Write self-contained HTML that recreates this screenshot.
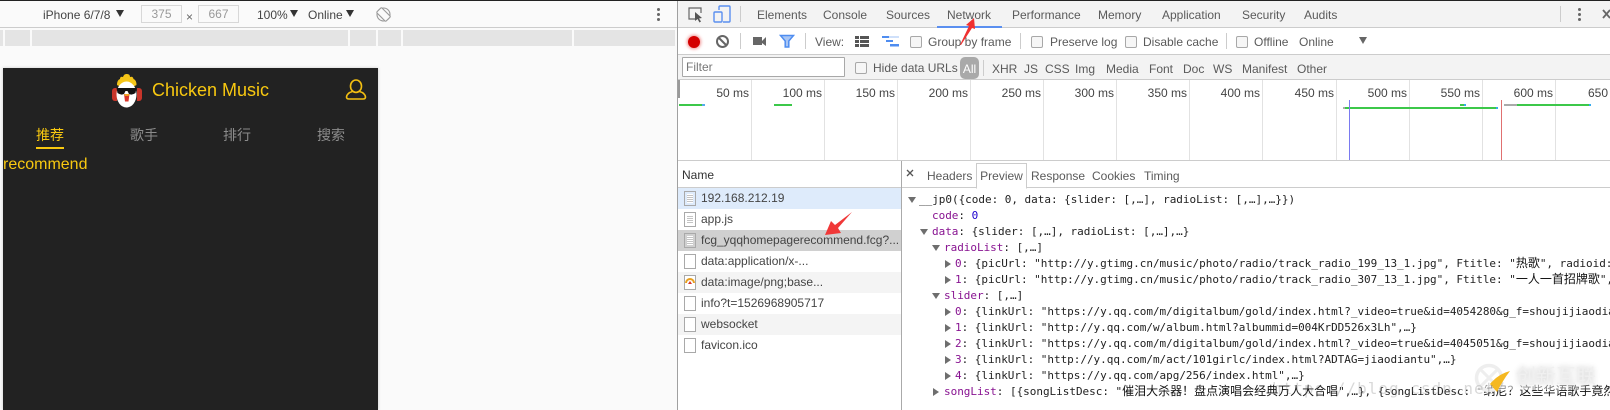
<!DOCTYPE html>
<html><head><meta charset="utf-8"><style>
html,body{margin:0;padding:0}
body{width:1610px;height:410px;overflow:hidden;position:relative;background:#fafafa;font:12px "Liberation Sans","Noto Sans CJK SC",sans-serif;color:#5a5a5a}
div,span.a{position:absolute}
.t{position:absolute;white-space:nowrap;line-height:16px;height:16px}
.d{position:absolute;width:1px;height:16px;background:#ccc}
.cb{position:absolute;width:10px;height:10px;border:1px solid #a8a8a8;border-radius:2px;background:#f6f6f6}
.g{position:absolute;top:80px;width:1px;height:80px;background:#e2e2e2}
.l{position:absolute;top:85px;white-space:nowrap;line-height:16px;width:60px;text-align:right;color:#444}
.r{position:absolute;left:678px;width:224px;height:21px}
.n{position:absolute;left:701px;white-space:nowrap;line-height:21px;color:#444;font-size:12px}
.i{position:absolute;left:684px;width:10px;height:13px;border:1px solid #a9a9a9;background:#fff}
.i.x{background:repeating-linear-gradient(#fff 0 1px,#c4c4c4 1px 2px);background-clip:content-box;padding:2px;width:6px;height:9px}
.m{position:absolute;white-space:pre;font:11px/16px "DejaVu Sans Mono","Noto Sans CJK SC",monospace;color:#222;height:16px;letter-spacing:-.025px}
.k{color:#881391}
.c{font-size:12px;line-height:0;color:#111;letter-spacing:0}
.tr{position:absolute;width:0;height:0;border-top:4px solid transparent;border-bottom:4px solid transparent;border-left:6px solid #6e6e6e}
.td{position:absolute;width:0;height:0;border-left:4px solid transparent;border-right:4px solid transparent;border-top:6px solid #6e6e6e}
.rg{position:absolute;top:30px;height:16px;background:#e4e4e4}
</style></head><body>

<!-- top line -->
<div style="left:0;top:0;width:1610px;height:1px;background:#222;z-index:5"></div>

<!-- device toolbar -->
<div style="left:0;top:1px;width:677px;height:26px;background:#fafafa;border-bottom:1px solid #ccc"></div>
<span class="t" style="left:43px;top:7px;color:#444">iPhone 6/7/8</span>
<div class="td" style="left:116px;top:10px;border-top-color:#333;border-top-width:7px"></div>
<div style="left:141px;top:5px;width:39px;height:16px;border:1px solid #d8d8d8;text-align:center;line-height:17px;color:#999;background:#fafafa">375</div>
<span class="t" style="left:186px;top:9px;color:#666">×</span>
<div style="left:198px;top:5px;width:39px;height:16px;border:1px solid #d8d8d8;text-align:center;line-height:17px;color:#999;background:#fafafa">667</div>
<span class="t" style="left:257px;top:7px;color:#444">100%</span>
<div class="td" style="left:290px;top:10px;border-top-color:#333;border-top-width:7px"></div>
<span class="t" style="left:308px;top:7px;color:#444">Online</span>
<div class="td" style="left:346px;top:10px;border-top-color:#333;border-top-width:7px"></div>
<svg style="position:absolute;left:376px;top:7px" width="15" height="15" viewBox="0 0 15 15"><circle cx="7.500" cy="7.500" r="6.500" fill="none" stroke="#999" stroke-width="1.100"/><rect x="1" y="4" width="13" height="7" rx="1" transform="rotate(45 7.500 7.500)" fill="#fafafa" stroke="#999" stroke-width="1.100"/></svg>
<div style="left:657px;top:8px;width:3px;height:3px;border-radius:2px;background:#666"></div>
<div style="left:657px;top:13px;width:3px;height:3px;border-radius:2px;background:#666"></div>
<div style="left:657px;top:18px;width:3px;height:3px;border-radius:2px;background:#666"></div>

<!-- ruler -->
<div class="rg" style="left:0;width:3px"></div>
<div class="rg" style="left:5px;width:25px"></div>
<div class="rg" style="left:32px;width:316px"></div>
<div class="rg" style="left:350px;width:26px"></div>
<div class="rg" style="left:378px;width:23px"></div>
<div class="rg" style="left:403px;width:169px"></div>
<div class="rg" style="left:574px;width:101px"></div>

<!-- phone -->
<div style="left:3px;top:68px;width:375px;height:342px;background:#222;box-shadow:0 0 3px #ccc"></div>
<svg style="position:absolute;left:105px;top:68px" width="45" height="42" viewBox="0 0 45 42">
<path d="M12 17 Q12 12 15 11 Q15 8 18 9 Q19 5.500 22 6 Q25 6 25 9 Q28 8 28.500 11 Q31.500 12 31.500 17 L22 22Z" fill="#f5c518"/>
<path d="M12 20 h-2 a3 3 0 0 0 -3 3 v7 a3 3 0 0 0 3 3 h2Z" fill="#c8352a"/>
<path d="M32 20 h2 a3 3 0 0 1 3 3 v7 a3 3 0 0 1 -3 3 h-2Z" fill="#c8352a"/>
<ellipse cx="21.500" cy="26.500" rx="10" ry="13" fill="#fff"/>
<path d="M11.500 20 H31.500 L30.500 25 Q27 27.500 24 26 L22.500 23 H20.500 L19 26 Q16 27.500 12.500 25Z" fill="#111"/>
<path d="M19 26 H24.500 L23.500 33.500 H20Z" fill="#d8352a"/>
<path d="M19 26 H24.500 L23.500 28 H20Z" fill="#f0a020"/>
</svg>
<span class="t" style="left:152px;top:80px;font-size:18px;line-height:20px;height:20px;color:#f8c810">Chicken Music</span>
<svg style="position:absolute;left:345px;top:78px" width="24" height="24" viewBox="0 0 24 24" fill="none" stroke="#f3bf12" stroke-width="1.600"><ellipse cx="11" cy="8.200" rx="5.500" ry="6.200"/><path d="M7.500 13.500 Q2 15 1.500 19 Q1.500 21 4 21 H18 Q20.500 21 20.500 19 Q20 15 14.500 13.500"/></svg>
<span class="t" style="left:36px;top:126px;font-size:14px;line-height:18px;height:18px;color:#f8c810">推荐</span>
<div style="left:36px;top:147px;width:28px;height:2px;background:#f8c810"></div>
<span class="t" style="left:130px;top:126px;font-size:14px;line-height:18px;height:18px;color:#8c8c8c">歌手</span>
<span class="t" style="left:223px;top:126px;font-size:14px;line-height:18px;height:18px;color:#8c8c8c">排行</span>
<span class="t" style="left:317px;top:126px;font-size:14px;line-height:18px;height:18px;color:#8c8c8c">搜索</span>
<span class="t" style="left:3px;top:156px;font-size:16px;line-height:18px;height:18px;color:#f8c810">recommend</span>

<!-- devtools -->
<div style="left:677px;top:1px;width:933px;height:409px;background:#fff"></div>
<div style="left:677px;top:1px;width:1px;height:409px;background:#a0a0a0;z-index:3"></div>
<div style="left:678px;top:1px;width:932px;height:26px;background:#f3f3f3;border-bottom:1px solid #ccc"></div>
<svg style="position:absolute;left:687px;top:6px" width="20" height="18" viewBox="0 0 20 18" fill="none"><path d="M10 13 H2 V2 H14 V7" stroke="#666" stroke-width="1.200"/><path d="M8 6 L8 15 L10.500 13 L12.500 16.500 L14 15.500 L12 12.500 L15 12Z" fill="#555"/></svg>
<svg style="position:absolute;left:713px;top:5px" width="18" height="19" viewBox="0 0 18 19" fill="none" stroke="#5a8ff0" stroke-width="1.400"><path d="M6 5 V2 Q6 1 7 1 H16 Q17 1 17 2 V16 Q17 17 16 17 H10"/><rect x="1" y="7" width="8" height="10" rx="1"/></svg>
<div class="d" style="left:740px;top:6px"></div>
<span class="t" style="left:757px;top:7px">Elements</span>
<span class="t" style="left:823px;top:7px">Console</span>
<span class="t" style="left:886px;top:7px">Sources</span>
<span class="t" style="left:947px;top:7px">Network</span>
<span class="t" style="left:1012px;top:7px">Performance</span>
<span class="t" style="left:1098px;top:7px">Memory</span>
<span class="t" style="left:1162px;top:7px">Application</span>
<span class="t" style="left:1242px;top:7px">Security</span>
<span class="t" style="left:1304px;top:7px">Audits</span>
<div style="left:937px;top:26px;width:65px;height:2px;background:#5a8ff0"></div>
<div class="d" style="left:1560px;top:6px"></div>
<div style="left:1578px;top:8px;width:3px;height:3px;border-radius:2px;background:#666"></div>
<div style="left:1578px;top:13px;width:3px;height:3px;border-radius:2px;background:#666"></div>
<div style="left:1578px;top:18px;width:3px;height:3px;border-radius:2px;background:#666"></div>
<svg style="position:absolute;left:1602px;top:9px" width="8" height="12"><path d="M1 1 L8 9 M8 1 L1 9" stroke="#666" stroke-width="1.800"/></svg>

<!-- row 2 -->
<div style="left:678px;top:54px;width:932px;height:1px;background:#ccc"></div>
<div style="left:688px;top:36px;width:12px;height:12px;border-radius:50%;background:#d40000;box-shadow:0 0 3px 1px #f09090"></div>
<svg style="position:absolute;left:715px;top:34px" width="15" height="15" viewBox="0 0 15 15" fill="none" stroke="#666" stroke-width="2"><circle cx="7.500" cy="7.500" r="5.500"/><path d="M3.500 3.500 L11.500 11.500"/></svg>
<div class="d" style="left:740px;top:33px"></div>
<svg style="position:absolute;left:752px;top:35px" width="16" height="12"><path d="M1 2 H10 V6 L14 2 V11 L10 8 V10 H1Z" fill="#666"/></svg>
<svg style="position:absolute;left:779px;top:34px" width="16" height="15"><path d="M1.500 1.500 H14.500 L9.800 7 V13 H6.200 V7Z" fill="#a8c6f5" stroke="#4f8df0" stroke-width="1.500"/></svg>
<div class="d" style="left:805px;top:33px"></div>
<span class="t" style="left:815px;top:34px">View:</span>
<svg style="position:absolute;left:855px;top:36px" width="15" height="11" fill="#555"><rect x="0" y="0" width="4" height="3"/><rect x="5" y="0" width="9" height="3"/><rect x="0" y="4" width="4" height="3"/><rect x="5" y="4" width="9" height="3"/><rect x="0" y="8" width="4" height="3"/><rect x="5" y="8" width="9" height="3"/></svg>
<svg style="position:absolute;left:882px;top:36px" width="17" height="11"><rect x="0" y="0" width="7" height="2" fill="#4f8df0"/><rect x="7" y="0" width="10" height="2" fill="#cfe0fa"/><rect x="4" y="4" width="7" height="2" fill="#4f8df0"/><rect x="8" y="8" width="9" height="2.500" fill="#4f8df0"/></svg>
<div class="cb" style="left:910px;top:36px"></div>
<span class="t" style="left:928px;top:34px">Group by frame</span>
<div class="d" style="left:1020px;top:33px"></div>
<div class="cb" style="left:1031px;top:36px"></div>
<span class="t" style="left:1050px;top:34px">Preserve log</span>
<div class="cb" style="left:1125px;top:36px"></div>
<span class="t" style="left:1143px;top:34px">Disable cache</span>
<div class="d" style="left:1226px;top:33px"></div>
<div class="cb" style="left:1236px;top:36px"></div>
<span class="t" style="left:1254px;top:34px">Offline</span>
<span class="t" style="left:1299px;top:34px">Online</span>
<div class="td" style="left:1359px;top:37px;border-left-width:4px;border-right-width:4px;border-top-width:7px;border-top-color:#666"></div>

<!-- row 3 -->
<div style="left:678px;top:55px;width:932px;height:24px;background:#f3f3f3;border-bottom:1px solid #ccc"></div>
<div style="left:682px;top:57px;width:161px;height:18px;border:1px solid #a8a8a8;border-radius:1px;background:#fff;line-height:18px;color:#777"><span style="margin-left:3px">Filter</span></div>
<div class="cb" style="left:855px;top:62px"></div>
<span class="t" style="left:873px;top:60px">Hide data URLs</span>
<div style="left:960px;top:57px;width:19px;height:22px;border-radius:5px;background:#a9a9a9;color:#fff;text-align:center;line-height:24px">All</div>
<div class="d" style="left:983px;top:60px"></div>
<span class="t" style="left:992px;top:61px">XHR</span>
<span class="t" style="left:1024px;top:61px">JS</span>
<span class="t" style="left:1045px;top:61px">CSS</span>
<span class="t" style="left:1075px;top:61px">Img</span>
<span class="t" style="left:1106px;top:61px">Media</span>
<span class="t" style="left:1149px;top:61px">Font</span>
<span class="t" style="left:1183px;top:61px">Doc</span>
<span class="t" style="left:1213px;top:61px">WS</span>
<span class="t" style="left:1242px;top:61px">Manifest</span>
<span class="t" style="left:1297px;top:61px">Other</span>

<!-- overview -->
<div style="left:678px;top:80px;width:2px;height:18px;background:#999"></div>
<div class="g" style="left:751px"></div><div class="g" style="left:824px"></div><div class="g" style="left:897px"></div><div class="g" style="left:970px"></div><div class="g" style="left:1043px"></div><div class="g" style="left:1116px"></div><div class="g" style="left:1189px"></div><div class="g" style="left:1262px"></div><div class="g" style="left:1336px"></div><div class="g" style="left:1409px"></div><div class="g" style="left:1482px"></div><div class="g" style="left:1555px"></div>
<span class="l" style="left:689px">50 ms</span>
<span class="l" style="left:762px">100 ms</span>
<span class="l" style="left:835px">150 ms</span>
<span class="l" style="left:908px">200 ms</span>
<span class="l" style="left:981px">250 ms</span>
<span class="l" style="left:1054px">300 ms</span>
<span class="l" style="left:1127px">350 ms</span>
<span class="l" style="left:1200px">400 ms</span>
<span class="l" style="left:1274px">450 ms</span>
<span class="l" style="left:1347px">500 ms</span>
<span class="l" style="left:1420px">550 ms</span>
<span class="l" style="left:1493px">600 ms</span>
<span class="t" style="left:1588px;top:85px;color:#444">650</span>
<div style="left:679px;top:104px;width:23px;height:2px;background:#3cc84a"></div>
<div style="left:702px;top:104px;width:3px;height:2px;background:#55aaee"></div>
<div style="left:774px;top:104px;width:18px;height:2px;background:#3cc84a"></div>
<div style="left:1343px;top:107px;width:2px;height:2px;background:#aaa"></div>
<div style="left:1345px;top:107px;width:151px;height:2px;background:#3cc84a"></div>
<div style="left:1496px;top:107px;width:2px;height:2px;background:#33aaee"></div>
<div style="left:1460px;top:104px;width:4px;height:2px;background:#3cc84a"></div>
<div style="left:1464px;top:104px;width:2px;height:2px;background:#33aaee"></div>
<div style="left:1504px;top:104px;width:13px;height:2px;background:#aaa"></div>
<div style="left:1517px;top:104px;width:72px;height:2px;background:#3cc84a"></div>
<div style="left:1589px;top:104px;width:2px;height:2px;background:#33aaee"></div>
<div style="left:1349px;top:100px;width:1px;height:60px;background:#7a7af0"></div>
<div style="left:1501px;top:100px;width:1px;height:60px;background:#e07070"></div>
<div style="left:678px;top:160px;width:932px;height:1px;background:#ccc"></div>

<!-- name list -->
<span class="t" style="left:682px;top:167px;color:#333">Name</span>
<div style="left:678px;top:187px;width:932px;height:1px;background:#ccc"></div>
<div style="left:901px;top:161px;width:1px;height:249px;background:#aaa"></div>
<div class="r" style="top:188px;width:223px;background:#deebfb"></div>
<div class="r" style="top:230px;width:223px;background:#d0d0d0"></div>
<div class="r" style="top:272px;width:223px;background:#f4f4f4"></div>
<div class="r" style="top:314px;width:223px;background:#f4f4f4"></div>
<div class="i x" style="top:191px"></div><span class="n" style="top:188px">192.168.212.19</span>
<div class="i x" style="top:212px"></div><span class="n" style="top:209px">app.js</span>
<div class="i x" style="top:233px"></div><span class="n" style="top:230px">fcg_yqqhomepagerecommend.fcg?...</span>
<div class="i" style="top:254px"></div><span class="n" style="top:251px">data:application/x-...</span>
<div class="i" style="top:275px"></div>
<svg style="position:absolute;left:685px;top:277px" width="10" height="10"><path d="M1 6 A4 4 0 0 1 9 6" fill="none" stroke="#e8a020" stroke-width="2"/><path d="M3 7 H7 L5 4Z" fill="#d8352a"/></svg>
<span class="n" style="top:272px">data:image/png;base...</span>
<div class="i" style="top:296px"></div><span class="n" style="top:293px">info?t=1526968905717</span>
<div class="i" style="top:317px"></div><span class="n" style="top:314px">websocket</span>
<div class="i" style="top:338px"></div><span class="n" style="top:335px">favicon.ico</span>

<!-- detail tabs -->
<svg style="position:absolute;left:906px;top:169px" width="8" height="8"><path d="M1 1 L7 7 M7 1 L1 7" stroke="#555" stroke-width="1.300"/></svg>
<span class="t" style="left:927px;top:168px">Headers</span>
<div style="left:976px;top:163px;width:49px;height:24px;border:1px solid #ccc;border-bottom:1px solid #fff;background:#fff;text-align:center;line-height:25px;box-sizing:content-box;z-index:2">Preview</div>
<span class="t" style="left:1031px;top:168px">Response</span>
<span class="t" style="left:1092px;top:168px">Cookies</span>
<span class="t" style="left:1144px;top:168px">Timing</span>

<!-- preview -->
<div style="left:902px;top:190px;width:708px;height:220px;overflow:hidden">
<div class="td" style="left:6px;top:7px"></div>
<span class="m" style="left:17px;top:2px">__jp0({code: 0, data: {slider: [,…], radioList: [,…],…}})</span>
<span class="m" style="left:30px;top:18px"><span class="k">code</span>: <span style="color:#1c00cf">0</span></span>
<div class="td" style="left:18px;top:39px"></div>
<span class="m" style="left:30px;top:34px"><span class="k">data</span>: {slider: [,…], radioList: [,…],…}</span>
<div class="td" style="left:30px;top:55px"></div>
<span class="m" style="left:42px;top:50px"><span class="k">radioList</span>: [,…]</span>
<div class="tr" style="left:43px;top:70px"></div>
<span class="m" style="left:53px;top:66px"><span class="k">0</span>: {picUrl: "http://y.gtimg.cn/music/photo/radio/track_radio_199_13_1.jpg", Ftitle: "<span class="c">热歌</span>", radioid: 199,…}</span>
<div class="tr" style="left:43px;top:86px"></div>
<span class="m" style="left:53px;top:82px"><span class="k">1</span>: {picUrl: "http://y.gtimg.cn/music/photo/radio/track_radio_307_13_1.jpg", Ftitle: "<span class="c">一人一首招牌歌</span>", radioid: 307,…}</span>
<div class="td" style="left:30px;top:103px"></div>
<span class="m" style="left:42px;top:98px"><span class="k">slider</span>: [,…]</span>
<div class="tr" style="left:43px;top:118px"></div>
<span class="m" style="left:53px;top:114px"><span class="k">0</span>: {linkUrl: "https://y.qq.com/m/digitalbum/gold/index.html?_video=true&amp;id=4054280&amp;g_f=shoujijiaodiantu",…}</span>
<div class="tr" style="left:43px;top:134px"></div>
<span class="m" style="left:53px;top:130px"><span class="k">1</span>: {linkUrl: "http://y.qq.com/w/album.html?albummid=004KrDD526x3Lh",…}</span>
<div class="tr" style="left:43px;top:150px"></div>
<span class="m" style="left:53px;top:146px"><span class="k">2</span>: {linkUrl: "https://y.qq.com/m/digitalbum/gold/index.html?_video=true&amp;id=4045051&amp;g_f=shoujijiaodiantu",…}</span>
<div class="tr" style="left:43px;top:166px"></div>
<span class="m" style="left:53px;top:162px"><span class="k">3</span>: {linkUrl: "http://y.qq.com/m/act/101girlc/index.html?ADTAG=jiaodiantu",…}</span>
<div class="tr" style="left:43px;top:182px"></div>
<span class="m" style="left:53px;top:178px"><span class="k">4</span>: {linkUrl: "https://y.qq.com/apg/256/index.html",…}</span>
<div class="tr" style="left:31px;top:198px"></div>
<span class="m" style="left:42px;top:194px"><span class="k">songList</span>: [{songListDesc: "<span class="c">催泪大杀器！盘点演唱会经典万人大合唱</span>",…}, {songListDesc: "<span class="c">纳尼？这些华语歌手竟然</span></span>
</div>

<!-- arrows -->
<svg style="position:absolute;left:0;top:0;z-index:6" width="1610" height="410">
<path d="M960 45 L969 26 L966 25 L974 18 L975 29 L972 28 L961 45Z" fill="#f03030"/>
<path d="M852 212 L838 228 L841 233 L825 235 L831 221 L835 225Z" fill="#f03838"/>
</svg>

<!-- watermark -->
<div style="left:1460px;top:350px;width:150px;height:40px;background:radial-gradient(ellipse at 30% 65%,rgba(255,255,255,.75) 0,rgba(255,255,255,.45) 45%,rgba(255,255,255,0) 75%);z-index:7"></div>
<svg style="position:absolute;left:1470px;top:362px;z-index:8" width="40" height="34"><circle cx="19" cy="16" r="12.500" fill="none" stroke="#eee" stroke-width="3.500"/><path d="M11 8 L27 24 M27 8 L11 24" stroke="#eee" stroke-width="3"/><path d="M20 22 Q28 12 40 9 Q33 18 27 30Z" fill="#f5b820"/></svg>
<span class="t" style="left:1516px;top:365px;z-index:8;font-size:20px;line-height:24px;height:24px;color:#f0f0f0;text-shadow:0 0 6px rgba(0,0,0,.22)">创新互联</span>
<span class="m" style="left:1272px;top:381px;z-index:8;font-size:16px;letter-spacing:1px;color:rgba(120,120,120,.28)">https://blog.csdn.net/</span>
</body></html>
